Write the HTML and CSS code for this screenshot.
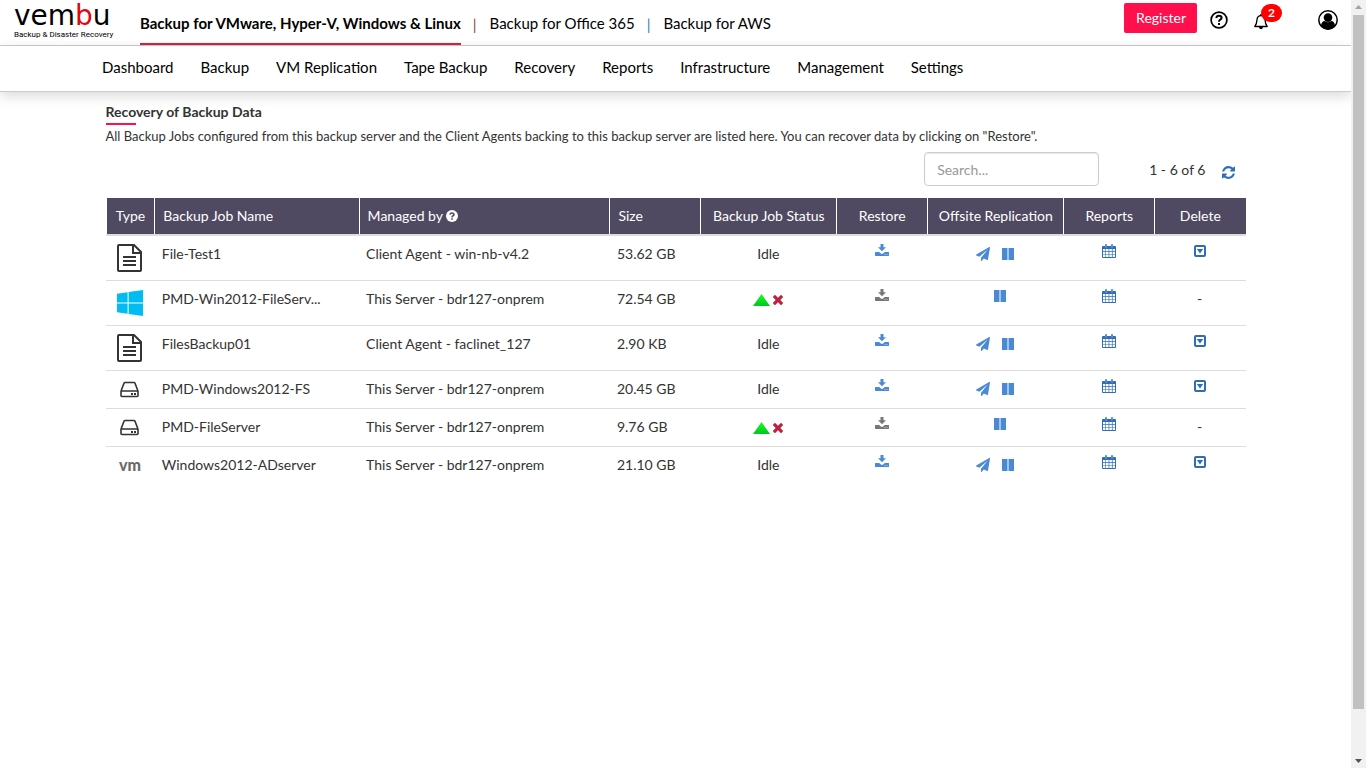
FILE: index.html
```html
<!DOCTYPE html>
<html lang="en">
<head>
    <meta charset="UTF-8">
    <title>Vembu BDR - Recovery</title>
    <link rel="stylesheet" href="styles.css">
</head>
<body>
    <!-- Icon definitions -->
    <svg class="sprite" aria-hidden="true">
        <symbol id="i-download" viewBox="0 0 14 12">
            <path d="M5.500 0h3v3.300h2.500L7 7.300 3 3.300h2.500z"/>
            <path d="M.4 8h3.800l1.400 1.300a2 2 0 0 0 2.800 0L9.800 8h3.800q.4 0 .4.500v3.100q0 .4-.4.4H.4q-.4 0-.4-.4V8.500Q0 8 .4 8zm9.200 2v.8h.8V10zm2 0v.8h.8V10z" fill-rule="evenodd"/>
        </symbol>
        <symbol id="i-plane" viewBox="0 0 1792 1792">
            <path d="M1764 11q33 24 27 64l-256 1536q-5 29-32 45-14 8-31 8-11 0-24-5l-453-185-242 295q-18 23-49 23-13 0-22-4-19-7-30.5-23.5t-11.5-36.5v-349l864-1059-1069 925-395-162q-37-14-40-55-2-40 32-59l1664-960q15-9 32-9 20 0 36 11z"/>
        </symbol>
        <symbol id="i-pause" viewBox="0 0 12 12">
            <path d="M0 0h5.500v12H0zM6.500 0H12v12H6.500z"/>
        </symbol>
        <symbol id="i-calendar" viewBox="0 0 14 14">
            <path d="M1 2h2v1.5h2V2h4v1.5h2V2h2q1 0 1 1v10q0 1-1 1H1q-1 0-1-1V3q0-1 1-1zm0 3v2h2.4V5zm3 0v2h2.6V5zm3.3 0v2h2.6V5zm3.3 0v2H13V5zM1 7.7v2.2h2.4V7.7zm3 0v2.2h2.6V7.7zm3.3 0v2.2h2.6V7.7zm3.3 0v2.2H13V7.7zM1 10.6V13h2.4v-2.4zm3 0V13h2.6v-2.4zm3.3 0V13h2.6v-2.4zm3.3 0V13H13v-2.4z" fill-rule="evenodd"/>
            <path d="M3.5.5h1v3h-1zM9.5.5h1v3h-1z" fill="none" stroke="currentColor" stroke-width=".8"/>
        </symbol>
        <symbol id="i-caret" viewBox="0 0 12 12">
            <rect x="1" y="1" width="10" height="10" rx="1" fill="none" stroke="currentColor" stroke-width="2"/>
            <path d="M2.800 4h6.400L6 8.400z"/>
        </symbol>
        <symbol id="i-times" viewBox="302 366 1188 1188">
            <path d="M1490 1322q0 40-28 68l-136 136q-28 28-68 28t-68-28l-294-294-294 294q-28 28-68 28t-68-28l-136-136q-28-28-28-68t28-68l294-294-294-294q-28-28-28-68t28-68l136-136q28-28 68-28t68 28l294 294 294-294q28-28 68-28t68 28l136 136q28 28 28 68t-28 68l-294 294 294 294q28 28 28 68z"/>
        </symbol>
        <symbol id="i-file" viewBox="0 0 26 28">
            <path d="M2 1h15l7 7v18q0 1-1 1H2q-1 0-1-1V2q0-1 1-1z" fill="none" stroke="currentColor" stroke-width="2"/>
            <path d="M16 1v8h8M6 13h13M6 17h13M6 21h13" fill="none" stroke="currentColor" stroke-width="2"/>
        </symbol>
        <symbol id="i-windows" viewBox="0 0 26 26">
            <path d="M0 3.7 10.6 2.2v10.2H0zM11.6 2 26 0v12.4H11.6zM0 13.5h10.6v10.2L0 22.2zM11.6 13.5H26V26l-14.4-2.1z"/>
        </symbol>
        <symbol id="i-drive" viewBox="0 0 19 16">
            <path d="M1 9.5 4 1.8Q4.3 1 5 1h9q.7 0 1 .8l3 7.7M1 9.5V14q0 1 1 1h15q1 0 1-1V9.5z" fill="none" stroke="currentColor" stroke-width="1.6" stroke-linejoin="round"/>
            <path d="M11 11.4h2v2h-2zM14 11.4h2v2h-2z"/>
        </symbol>
        <symbol id="i-up" viewBox="0 0 17 12">
            <path d="M8.500 0 17 12H0z" fill="url(#green)"/>
        </symbol>
        <linearGradient id="green" x1="0" y1="0" x2="0" y2="1">
            <stop offset="0" stop-color="#1aff1a"/>
            <stop offset="1" stop-color="#00c424"/>
        </linearGradient>
    </svg>

    <div class="page">
        <header class="topbar">
            <a href="#" class="logo">
                <span class="logo-name">vem<b>b</b>u</span>
                <span class="logo-tag">Backup &amp; Disaster Recovery</span>
            </a>
            <nav class="products">
                <a href="#" class="product active">Backup for VMware, Hyper-V, Windows &amp; Linux</a>
                <span class="sep">|</span>
                <a href="#" class="product">Backup for Office 365</a>
                <span class="sep blue">|</span>
                <a href="#" class="product">Backup for AWS</a>
            </nav>
            <div class="tools">
                <button class="register">Register</button>
                <button class="tool help" aria-label="Help">
                    <svg width="18" height="18" viewBox="0 0 18 18"><circle cx="9" cy="9" r="7.900" fill="none" stroke="#000" stroke-width="1.700"/><path d="M6.300 7Q6.600 4.700 9 4.700q2.600 0 2.600 2 0 1.300-1.400 2Q9 9.300 9 10.700" fill="none" stroke="#000" stroke-width="2"/><path d="M8 12h2v2H8z"/></svg>
                </button>
                <button class="tool bell" aria-label="Notifications">
                    <svg width="14" height="16" viewBox="0 0 14 16"><path d="M7 1.600q3.600 0 4 4 .2 4.600 2.200 6.900H.8Q2.800 10.200 3 5.600q.4-4 4-4z" fill="none" stroke="#000" stroke-width="1.300" stroke-linejoin="round"/><path d="M6.300 0h1.400v2H6.300zM5 13h4q-.3 2.200-2 2.200T5 13z"/></svg>
                    <span class="badge">2</span>
                </button>
                <button class="tool user" aria-label="Account">
                    <svg width="20" height="20" viewBox="0 0 20 20"><circle cx="10" cy="10" r="9.200" fill="none" stroke="#000" stroke-width="1.500"/><circle cx="10" cy="7.600" r="4.300"/><path d="M3 15.700q.5-4.500 3.800-4.600Q10 13.600 13.200 11.100q3.300.1 3.800 4.600Q14.300 19.500 10 19.500T3 15.700z"/></svg>
                </button>
            </div>
        </header>

        <nav class="menu">
            <a href="#">Dashboard</a>
            <a href="#">Backup</a>
            <a href="#">VM Replication</a>
            <a href="#">Tape Backup</a>
            <a href="#">Recovery</a>
            <a href="#">Reports</a>
            <a href="#">Infrastructure</a>
            <a href="#">Management</a>
            <a href="#">Settings</a>
        </nav>

        <main class="container">
            <h1>Recovery of Backup Data</h1>
            <p class="intro">All Backup Jobs configured from this backup server and the Client Agents backing to this backup server are listed here. You can recover data by clicking on "Restore".</p>

            <div class="toolbar">
                <input type="text" class="search" placeholder="Search..." aria-label="Search backup jobs">
                <span class="count">1 - 6 of 6</span>
                <button class="refresh" aria-label="Refresh">
                    <svg width="13" height="13" viewBox="128 128 1536 1536"><path d="M1639 1056q0 5-1 7-64 268-268 434.500t-478 166.500q-146 0-282.500-55t-243.500-157l-129 129q-19 19-45 19t-45-19-19-45v-448q0-26 19-45t45-19h448q26 0 45 19t19 45-19 45l-137 137q71 66 161 102t187 36q134 0 250-65t186-179q11-17 53-117 8-23 30-23h192q13 0 22.500 9.500t9.500 22.500zm25-800v448q0 26-19 45t-45 19h-448q-26 0-45-19t-19-45 19-45l138-138q-148-137-349-137-134 0-250 65t-186 179q-11 17-53 117-8 23-30 23h-199q-13 0-22.500-9.500t-9.500-22.500v-7q65-268 270-434.500t480-166.500q146 0 284 55.500t245 156.500l130-129q19-19 45-19t45 19 19 45z"/></svg>
                </button>
            </div>

            <table class="jobs">
                <colgroup>
                    <col class="c-type">
                    <col class="c-name">
                    <col class="c-managed">
                    <col class="c-small">
                    <col class="c-mid">
                    <col class="c-small">
                    <col class="c-mid">
                    <col class="c-small">
                    <col class="c-small">
                </colgroup>
                <thead>
                    <tr>
                        <th class="center">Type</th>
                        <th>Backup Job Name</th>
                        <th>Managed by <svg class="hint" width="12" height="12" viewBox="0 0 12 12"><circle cx="6" cy="6" r="6" fill="#fff"/><path d="M4 4.600Q4.200 3 6 3t1.900 1.400Q7.900 5.300 7 5.800T6 7.300" fill="none" stroke="#4f4a61" stroke-width="1.600"/><path d="M5.200 8.200h1.600v1.500H5.200z" fill="#4f4a61"/></svg></th>
                        <th>Size</th>
                        <th class="center">Backup Job Status</th>
                        <th class="center">Restore</th>
                        <th class="center">Offsite Replication</th>
                        <th class="center">Reports</th>
                        <th class="center">Delete</th>
                    </tr>
                </thead>
                <tbody>
                    <tr>
                        <td class="center"><svg class="type" width="26" height="28"><use href="#i-file"/></svg></td>
                        <td>File-Test1</td>
                        <td>Client Agent - win-nb-v4.2</td>
                        <td>53.62 GB</td>
                        <td class="center">Idle</td>
                        <td><button class="act" aria-label="Restore"><svg width="14" height="12"><use href="#i-download"/></svg></button></td>
                        <td><div class="pair"><button class="act" aria-label="Replicate now"><svg width="14" height="14"><use href="#i-plane"/></svg></button><button class="act" aria-label="Pause"><svg width="12" height="12"><use href="#i-pause"/></svg></button></div></td>
                        <td><button class="act dark" aria-label="Reports"><svg width="14" height="14"><use href="#i-calendar"/></svg></button></td>
                        <td><button class="act dark" aria-label="Delete"><svg width="12" height="14"><use href="#i-caret"/></svg></button></td>
                    </tr>
                    <tr>
                        <td class="center"><svg class="type win" width="26" height="28"><use href="#i-windows"/></svg></td>
                        <td>PMD-Win2012-FileServ...</td>
                        <td>This Server - bdr127-onprem</td>
                        <td>72.54 GB</td>
                        <td><div class="status"><svg width="17" height="12"><use href="#i-up"/></svg><svg class="bad" width="10" height="10"><use href="#i-times"/></svg></div></td>
                        <td><button class="act" aria-label="Restore" disabled><svg width="14" height="12"><use href="#i-download"/></svg></button></td>
                        <td><button class="act single" aria-label="Pause"><svg width="12" height="14"><use href="#i-pause"/></svg></button></td>
                        <td><button class="act dark" aria-label="Reports"><svg width="14" height="14"><use href="#i-calendar"/></svg></button></td>
                        <td class="center">-</td>
                    </tr>
                    <tr>
                        <td class="center"><svg class="type" width="26" height="28"><use href="#i-file"/></svg></td>
                        <td>FilesBackup01</td>
                        <td>Client Agent - faclinet_127</td>
                        <td>2.90 KB</td>
                        <td class="center">Idle</td>
                        <td><button class="act" aria-label="Restore"><svg width="14" height="12"><use href="#i-download"/></svg></button></td>
                        <td><div class="pair"><button class="act" aria-label="Replicate now"><svg width="14" height="14"><use href="#i-plane"/></svg></button><button class="act" aria-label="Pause"><svg width="12" height="12"><use href="#i-pause"/></svg></button></div></td>
                        <td><button class="act dark" aria-label="Reports"><svg width="14" height="14"><use href="#i-calendar"/></svg></button></td>
                        <td><button class="act dark" aria-label="Delete"><svg width="12" height="14"><use href="#i-caret"/></svg></button></td>
                    </tr>
                    <tr>
                        <td class="center"><svg class="type" width="19" height="21"><use href="#i-drive"/></svg></td>
                        <td>PMD-Windows2012-FS</td>
                        <td>This Server - bdr127-onprem</td>
                        <td>20.45 GB</td>
                        <td class="center">Idle</td>
                        <td><button class="act" aria-label="Restore"><svg width="14" height="12"><use href="#i-download"/></svg></button></td>
                        <td><div class="pair"><button class="act" aria-label="Replicate now"><svg width="14" height="14"><use href="#i-plane"/></svg></button><button class="act" aria-label="Pause"><svg width="12" height="12"><use href="#i-pause"/></svg></button></div></td>
                        <td><button class="act dark" aria-label="Reports"><svg width="14" height="14"><use href="#i-calendar"/></svg></button></td>
                        <td><button class="act dark" aria-label="Delete"><svg width="12" height="14"><use href="#i-caret"/></svg></button></td>
                    </tr>
                    <tr>
                        <td class="center"><svg class="type" width="19" height="21"><use href="#i-drive"/></svg></td>
                        <td>PMD-FileServer</td>
                        <td>This Server - bdr127-onprem</td>
                        <td>9.76 GB</td>
                        <td><div class="status"><svg width="17" height="12"><use href="#i-up"/></svg><svg class="bad" width="10" height="10"><use href="#i-times"/></svg></div></td>
                        <td><button class="act" aria-label="Restore" disabled><svg width="14" height="12"><use href="#i-download"/></svg></button></td>
                        <td><button class="act single" aria-label="Pause"><svg width="12" height="14"><use href="#i-pause"/></svg></button></td>
                        <td><button class="act dark" aria-label="Reports"><svg width="14" height="14"><use href="#i-calendar"/></svg></button></td>
                        <td class="center">-</td>
                    </tr>
                    <tr>
                        <td class="center"><span class="vm">vm</span></td>
                        <td>Windows2012-ADserver</td>
                        <td>This Server - bdr127-onprem</td>
                        <td>21.10 GB</td>
                        <td class="center">Idle</td>
                        <td><button class="act" aria-label="Restore"><svg width="14" height="12"><use href="#i-download"/></svg></button></td>
                        <td><div class="pair"><button class="act" aria-label="Replicate now"><svg width="14" height="14"><use href="#i-plane"/></svg></button><button class="act" aria-label="Pause"><svg width="12" height="12"><use href="#i-pause"/></svg></button></div></td>
                        <td><button class="act dark" aria-label="Reports"><svg width="14" height="14"><use href="#i-calendar"/></svg></button></td>
                        <td><button class="act dark" aria-label="Delete"><svg width="12" height="14"><use href="#i-caret"/></svg></button></td>
                    </tr>
                </tbody>
            </table>
        </main>
    </div>

    <div class="scrollbar" aria-hidden="true">
        <svg width="7" height="4" viewBox="0 0 7 4"><path d="M3.500 0 7 4H0z" fill="#a3a3a3"/></svg>
        <div class="track"><div class="thumb"></div></div>
        <svg width="7" height="4" viewBox="0 0 7 4"><path d="M0 0h7L3.500 4z" fill="#505050"/></svg>
    </div>
</body>
</html>
```
FILE: styles.css
```css
* {
    box-sizing: border-box;
}

body {
    margin: 0;
    display: flex;
    height: 100vh;
    overflow: hidden;
    background: #fff;
    color: #333;
    font-family: Lato, sans-serif;
    font-size: 14px;
    line-height: 20px;
}

a {
    color: #000;
    text-decoration: none;
}

button {
    padding: 0;
    border: 0;
    background: none;
    font: inherit;
    cursor: pointer;
}

svg {
    fill: currentColor;
}

.sprite {
    position: absolute;
    width: 0;
    height: 0;
}

.page {
    flex: 1;
    min-width: 0;
}

/* Top bar */
.topbar {
    display: flex;
    height: 46px;
    border-bottom: 1px solid #ccc;
}

.logo {
    display: flex;
    flex-direction: column;
    width: 126px;
    margin-left: 14px;
    padding-top: 2px;
    white-space: nowrap;
}

.logo-name {
    font-family: "DejaVu Sans", sans-serif;
    font-size: 28px;
    line-height: 28px;
}

.logo-name b {
    color: #e30613;
    font-weight: normal;
}

.logo-tag {
    font-family: Roboto, sans-serif;
    font-size: 8px;
    line-height: 10px;
}

.products {
    display: flex;
    font-size: 15px;
}

.product {
    height: 45px;
    padding-top: 13px;
}

.product.active {
    border-bottom: 2px solid #dc1a3c;
    font-weight: bold;
}

.sep {
    padding: 14px 13px 0 12px;
    color: #8a4b32;
}

.sep.blue {
    color: #337ab7;
}

.tools {
    display: flex;
    align-items: flex-start;
    margin-left: auto;
    padding-right: 13px;
}

.register {
    height: 30px;
    margin-top: 3px;
    padding: 0 11px 0 12px;
    border-radius: 2px;
    background: #ff0f4b;
    color: #fff;
}

.tool {
    display: flex;
    position: relative;
    color: #000;
}

.help {
    margin: 11px 0 0 13px;
}

.bell {
    margin: 14px 0 0 26px;
}

.user {
    margin: 10px 0 0 50px;
}

.badge {
    position: absolute;
    left: 7px;
    top: -10px;
    width: 21px;
    border-radius: 9px;
    background: #f00;
    color: #fff;
    font-size: 12px;
    font-weight: bold;
    line-height: 18px;
}

/* Main menu */
.menu {
    display: flex;
    gap: 27px;
    height: 46px;
    padding: 11px 0 0 102px;
    border-bottom: 1px solid #ccc;
    box-shadow: 0 4px 12px rgba(0, 0, 0, 0.15);
    font-size: 15px;
}

/* Content */
.container {
    max-width: 1170px;
    margin: 0 auto;
    padding: 10px 15px;
}

h1 {
    margin: 0;
    font-size: 14px;
    line-height: 20px;
}

h1::after {
    content: "";
    display: block;
    width: 30px;
    height: 2px;
    margin-top: 1px;
    background: #ff0f4b;
}

.intro {
    margin: 1px 0 6px;
    font-size: 13px;
}

.toolbar {
    display: flex;
    align-items: center;
    justify-content: flex-end;
    padding-right: 11px;
    margin-bottom: 12px;
}

.search {
    width: 175px;
    height: 34px;
    padding: 6px 12px;
    border: 1px solid #ccc;
    border-radius: 4px;
    box-shadow: inset 0 1px 1px rgba(0, 0, 0, 0.08);
    font: inherit;
}

.search::placeholder {
    color: #999;
}

.count {
    margin: 0 16px 0 50px;
    padding-top: 2px;
}

.refresh {
    display: flex;
    padding-top: 6px;
    color: #2e6db8;
}

/* Jobs table */
.jobs {
    width: 100%;
    table-layout: fixed;
    border-collapse: collapse;
}

.c-type {
    width: 4.3%;
}

.c-name {
    width: 18%;
}

.c-managed {
    width: 22.1%;
}

.c-mid {
    width: 12%;
}

.c-small {
    width: 8%;
}

.jobs th {
    padding: 8px;
    border-left: 1px solid #fff;
    border-bottom: 2px solid #ddd;
    background: #4f4a61;
    color: #fff;
    font-weight: normal;
    text-align: left;
    white-space: nowrap;
}

.jobs td {
    padding: 8px 8px 8px 7px;
    border-bottom: 1px solid #ddd;
    vertical-align: top;
    white-space: nowrap;
}

.jobs tr:last-child td {
    border-bottom: 0;
}

.jobs .center {
    text-align: center;
}

.hint {
    vertical-align: -1px;
}

.type {
    display: block;
    margin: 0 auto;
}

.win {
    color: #00bcf2;
}

.vm {
    color: #6d6a6b;
    font-size: 16px;
    font-weight: 900;
}

.act {
    display: block;
    margin: 0 auto;
    color: #4a8ad4;
}

.act.dark {
    color: #2e6db8;
}

.act.single {
    padding-left: 9px;
}

.act:disabled {
    color: #777;
}

.act svg {
    display: block;
}

.pair,
.status {
    display: flex;
    justify-content: center;
    align-items: center;
    height: 20px;
}

.pair {
    gap: 12px;
}

.pair .act {
    margin: 0;
}

.status {
    gap: 3px;
    padding-top: 2px;
}

.bad {
    color: #c0203f;
}

/* Scrollbar */
.scrollbar {
    display: flex;
    flex-direction: column;
    align-items: center;
    gap: 6px;
    width: 15px;
    padding: 5px 0;
    background: #f1f1f1;
}

.track {
    flex: 1;
    width: 11px;
}

.thumb {
    height: 94%;
    background: #c1c1c1;
}
```
